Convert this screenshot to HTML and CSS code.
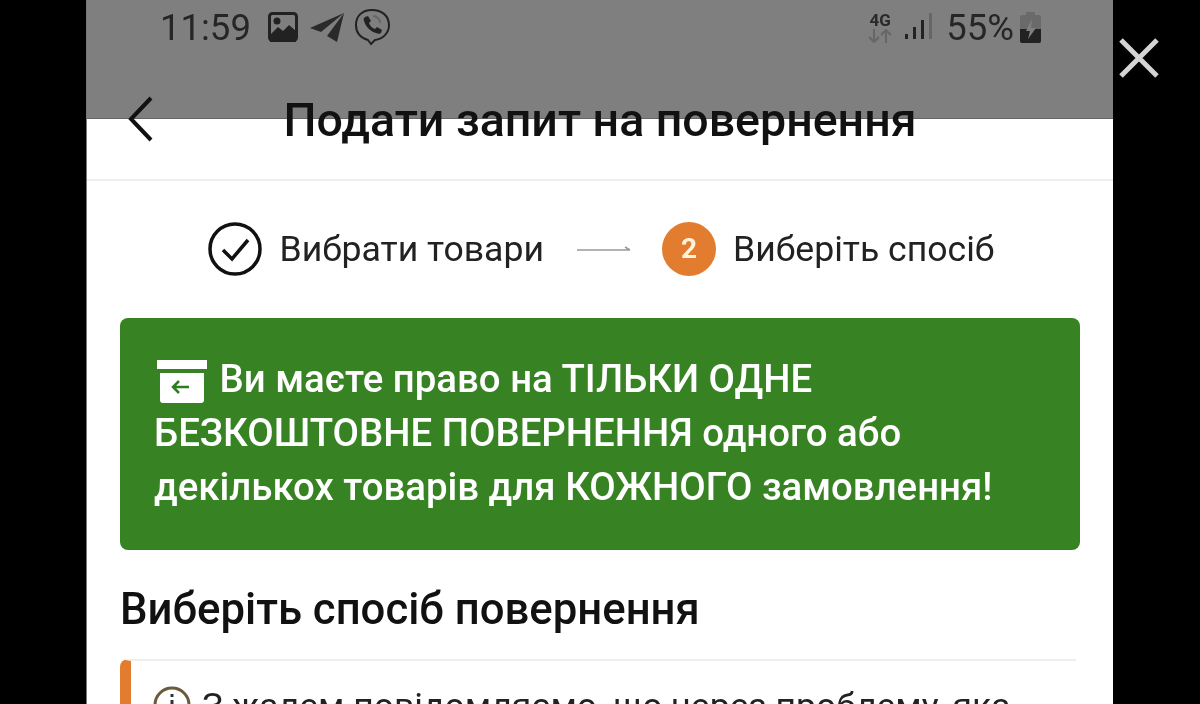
FILE: index.html
```html
<!DOCTYPE html>
<html lang="uk">
<head>
  <meta charset="UTF-8" />
  <title>Подати запит на повернення</title>
  <link rel="stylesheet" href="styles.css">
</head>
<body>

<div class="phone">
  <div class="status-bar">
    <div class="status-left">
      <span class="clock">11:59</span>
      <svg class="ico-photo" width="30" height="30" viewBox="0 0 30 30">
        <rect x="1.5" y="1.5" width="27" height="27" rx="3" fill="none" stroke="#222" stroke-width="3"/>
        <path d="M2 23l8-8 5 4 6-6 7 6v12H2z" fill="#222"/>
        <circle cx="9" cy="9" r="3.5" fill="#222"/>
      </svg>
      <svg class="ico-plane" width="35" height="30" viewBox="0 0 35 30">
        <path d="M0 16L34 1 27 30 17 24 34 1 11 20z" fill="#2a2a2a"/>
      </svg>
      <svg class="ico-viber" width="35" height="38" viewBox="0 0 35 38">
        <path d="M17 2C7 2 1 8 1 17c0 8 5 13 12 15l3 4 4-4c8-1 14-7 14-15C34 8 27 2 17 2z" fill="none" stroke="#222" stroke-width="2"/>
        <path d="M10 9l3-1 3 5-2 2c1 3 3 5 6 6l2-2 5 3-1 3c-1 1-3 1-5 0-6-2-10-6-12-12-1-2 0-3 1-4z" fill="#222"/>
        <path d="M18 8c4 0 7 3 7 7" fill="none" stroke="#666" stroke-width="2"/>
      </svg>
    </div>
    <div class="status-right">
      <span class="net">
        <b>4G</b>
        <svg width="24" height="14" viewBox="0 0 24 14">
          <path d="M6 0v13M1 8l5 5 5-5" fill="none" stroke="#666" stroke-width="2"/>
          <path d="M18 14V1M13 6l5-5 5 5" fill="none" stroke="#666" stroke-width="2"/>
        </svg>
      </span>
      <svg class="ico-signal" width="27" height="28" viewBox="0 0 27 28">
        <rect x="0" y="21" width="3" height="5" fill="#222"/>
        <rect x="8" y="14" width="3" height="12" fill="#222"/>
        <rect x="16" y="7" width="3" height="19" fill="#222"/>
        <rect x="24" y="0" width="3" height="26" fill="#666"/>
      </svg>
      <span class="battery-pct">55%</span>
      <svg class="ico-battery" width="21" height="31" viewBox="0 0 21 31">
        <path d="M6 0h9v3h4a2 2 0 0 1 2 2v24a2 2 0 0 1-2 2H2a2 2 0 0 1-2-2V5a2 2 0 0 1 2-2h4z" fill="#6a6a6a"/>
        <path d="M0 17h21v12a2 2 0 0 1-2 2H2a2 2 0 0 1-2-2z" fill="#222"/>
        <path d="M12 7l-6 12h4l-2 8 8-11h-5z" fill="#808080"/>
      </svg>
    </div>
  </div>

  <header class="title-bar">
    <svg class="back" width="26" height="46" viewBox="0 0 26 46">
      <path d="M23 2L3 23l20 21" fill="none" stroke="#111" stroke-width="4"/>
    </svg>
    <h1>Подати запит на повернення</h1>
  </header>

  <div class="steps">
    <div class="step">
      <svg width="54" height="54" viewBox="0 0 54 54">
        <circle cx="27" cy="27" r="25" fill="none" stroke="#111" stroke-width="3.5"/>
        <path d="M15 28l9 9 16-19" fill="none" stroke="#111" stroke-width="3.5"/>
      </svg>
      <span>Вибрати товари</span>
    </div>
    <svg class="step-arrow" width="54" height="8" viewBox="0 0 54 8">
      <path d="M0 5h53M48 2l5 3" fill="none" stroke="#999" stroke-width="1.5"/>
    </svg>
    <div class="step">
      <span class="step-num">2</span>
      <span>Виберіть спосіб</span>
    </div>
  </div>

  <div class="notice">
    <svg class="ico-box" width="50" height="44" viewBox="0 0 50 44">
      <rect x="0" y="0" width="50" height="9" fill="#fff"/>
      <path d="M3 13h44v27a3 3 0 0 1-3 3H6a3 3 0 0 1-3-3z" fill="#fff"/>
      <path d="M32 27H16M22 21l-6 6 6 6" fill="none" stroke="#2f7d22" stroke-width="2.5"/>
    </svg>
    Ви маєте право на ТІЛЬКИ ОДНЕ<br>
    БЕЗКОШТОВНЕ ПОВЕРНЕННЯ одного або<br>
    декількох товарів для КОЖНОГО замовлення!
  </div>

  <h2>Виберіть спосіб повернення</h2>

  <div class="warning">
    <svg class="ico-info" width="38" height="38" viewBox="0 0 38 38">
      <circle cx="19" cy="19" r="17" fill="none" stroke="#6b5a3c" stroke-width="3"/>
      <rect x="17.5" y="8" width="3" height="3" fill="#333"/>
      <rect x="17.5" y="14" width="3" height="14" fill="#333"/>
    </svg>
    <span>З жалем повідомляємо, що через проблему, яка</span>
  </div>

  <div class="dim"></div>
</div>

<svg class="close" width="40" height="40" viewBox="0 0 40 40">
  <path d="M2 2l36 36M38 2L2 38" stroke="#d4d4d4" stroke-width="5"/>
</svg>

</body>
</html>
```

FILE: styles.css
```css
html, body {
  margin: 0;
  padding: 0;
  height: 704px;
  overflow: hidden;
  background: #000;
  font-family: Roboto, "Liberation Sans", sans-serif;
  color: #1a1a1a;
}

.phone {
  position: relative;
  width: 1027px;
  height: 704px;
  margin-left: 86px;
  background: #fff;
  border-left: 1px solid #777;
  box-sizing: border-box;
  overflow: hidden;
  filter: blur(0.5px);
}

.dim {
  position: absolute;
  top: 0;
  left: 0;
  right: 0;
  height: 118px;
  background: rgba(0, 0, 0, 0.5);
  border-bottom: 1px solid #666;
  z-index: 1;
}

.status-bar {
  position: relative;
  z-index: 2;
  display: flex;
  justify-content: space-between;
  align-items: center;
  height: 54px;
  padding: 0 72px 0 73px;
}

.status-left, .status-right {
  display: flex;
  align-items: center;
}

.clock, .battery-pct {
  font-size: 36.5px;
  color: #262626;
}

.ico-photo { margin-left: 17px; }
.ico-plane { margin-left: 12px; }
.ico-viber { margin-left: 10px; }

.net {
  display: flex;
  flex-direction: column;
  align-items: center;
  line-height: 1;
  margin-right: 13px;
}

.net b {
  font-size: 17px;
  color: #2a2a2a;
}

.battery-pct { margin: 0 6px 0 14px; }

.title-bar {
  position: relative;
  display: flex;
  justify-content: center;
  align-items: center;
  height: 127px;
  border-bottom: 2px solid #eee;
  box-sizing: border-box;
  z-index: 2;
}

.title-bar h1 {
  margin: 6px 0 0;
  font-size: 46.5px;
  font-weight: 500;
  color: #111;
}

.back {
  position: absolute;
  left: 41px;
  top: 42px;
}

.steps {
  display: flex;
  justify-content: center;
  align-items: center;
  gap: 34px;
  height: 137px;
  box-sizing: border-box;
  padding: 0 0 2px 3px;
}

.step {
  display: flex;
  align-items: center;
  gap: 17px;
  font-size: 35.6px;
  color: #222;
}

.step-arrow {
  margin: 0 -3px 0 -1px;
}

.step-num {
  display: flex;
  justify-content: center;
  align-items: center;
  width: 54px;
  height: 54px;
  border-radius: 50%;
  background: #e27c2e;
  color: #fff3e0;
  font-size: 28px;
  font-weight: 700;
}

.notice {
  margin: 0 33px;
  padding: 34px 34px;
  height: 232px;
  box-sizing: border-box;
  border-radius: 8px;
  background: #378323;
  color: #fff;
  font-size: 38.4px;
  font-weight: 500;
  line-height: 54px;
  white-space: nowrap;
}

.ico-box {
  vertical-align: -12px;
  margin: 0 3px 0 3px;
}

h2 {
  margin: 34px 33px 0;
  font-size: 43.7px;
  font-weight: 500;
  line-height: 50px;
  color: #111;
}

.warning {
  display: flex;
  align-items: flex-start;
  gap: 11px;
  margin: 25px 37px 0 33px;
  padding: 25px 0 0 22px;
  border-top: 2px solid #eee;
  border-left: 11px solid #e27c2e;
  border-top-left-radius: 8px;
  font-size: 35.6px;
  line-height: 40px;
  color: #222;
  white-space: nowrap;
}

.close {
  position: absolute;
  left: 1119px;
  top: 38px;
}
```
